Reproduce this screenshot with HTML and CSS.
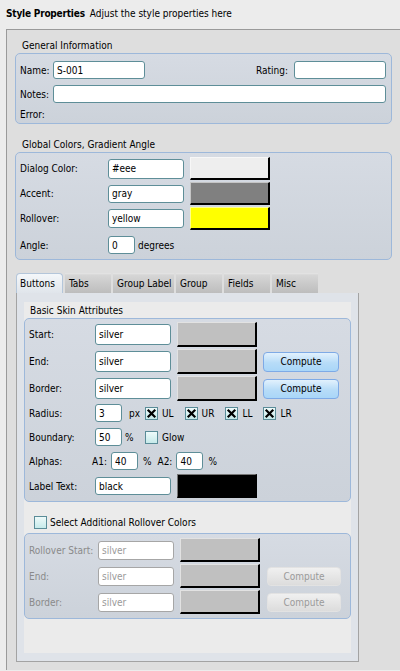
FILE: index.html
```html
<!DOCTYPE html>
<html>
<head>
<meta charset="utf-8">
<link rel="stylesheet" href="styles.css">
</head>
<body>
<div class="title"><b>Style Properties</b><span>Adjust the style properties here</span></div>
<div class="panel">
  <div class="legend">General Information</div>
  <div class="group g-general">
    <div class="row">
      <span class="lbl w33">Name:</span><input class="fld w92 h18" type="text" value="S-001">
      <span class="spacer"></span>
      <span class="lbl rating">Rating:</span><input class="fld w92 h18" type="text" value="">
    </div>
    <div class="row gap6">
      <span class="lbl w33">Notes:</span><input class="fld grow h18" type="text" value="">
    </div>
    <div class="row err"><span class="lbl">Error:</span></div>
  </div>

  <div class="legend mt14">Global Colors, Gradient Angle</div>
  <div class="group g-global">
    <div class="crow">
      <span class="lbl w88">Dialog Color:</span><input class="fld w76 h20" type="text" value="#eee"><span class="swatch sw-eee"></span>
    </div>
    <div class="crow gap2">
      <span class="lbl w88">Accent:</span><input class="fld w76 h18" type="text" value="gray"><span class="swatch sw-gray"></span>
    </div>
    <div class="crow gap2">
      <span class="lbl w88">Rollover:</span><input class="fld w76 h19" type="text" value="yellow"><span class="swatch sw-yellow"></span>
    </div>
    <div class="row angle">
      <span class="lbl w88">Angle:</span><input class="fld w27 h18" type="text" value="0"><span class="unit-deg">degrees</span>
    </div>
  </div>

  <div class="tabs">
    <span class="tab active t-buttons">Buttons</span>
    <span class="tab t46">Tabs</span>
    <span class="tab t-gl">Group Label</span>
    <span class="tab t46">Group</span>
    <span class="tab t46">Fields</span>
    <span class="tab t46">Misc</span>
  </div>
  <div class="pane">
    <div class="inner">
      <div class="legend2">Basic Skin Attributes</div>
      <div class="group g-skin">
        <div class="brow">
          <span class="lbl w66">Start:</span><input class="fld w76 h21" type="text" value="silver"><span class="swatch sw-silver h25"></span>
        </div>
        <div class="brow gap2">
          <span class="lbl w66">End:</span><input class="fld w76 h21" type="text" value="silver"><span class="swatch sw-silver h25"></span><button class="compute">Compute</button>
        </div>
        <div class="brow gap2">
          <span class="lbl w66">Border:</span><input class="fld w76 h21" type="text" value="silver"><span class="swatch sw-silver h25"></span><button class="compute">Compute</button>
        </div>
        <div class="row radius">
          <span class="lbl w66">Radius:</span><input class="fld w27 h18" type="text" value="3"><span class="unit">px</span>
          <span class="chk-item"><span class="chk on"><svg viewBox="0 0 13 13" width="13" height="13"><path d="M3.5 3.5 L9.5 9.5 M9.5 3.5 L3.5 9.5" stroke="#000" stroke-width="2.2" stroke-linecap="square" fill="none"/></svg></span><span class="chk-txt">UL</span></span>
          <span class="chk-item"><span class="chk on"><svg viewBox="0 0 13 13" width="13" height="13"><path d="M3.5 3.5 L9.5 9.5 M9.5 3.5 L3.5 9.5" stroke="#000" stroke-width="2.2" stroke-linecap="square" fill="none"/></svg></span><span class="chk-txt">UR</span></span>
          <span class="chk-item"><span class="chk on"><svg viewBox="0 0 13 13" width="13" height="13"><path d="M3.5 3.5 L9.5 9.5 M9.5 3.5 L3.5 9.5" stroke="#000" stroke-width="2.2" stroke-linecap="square" fill="none"/></svg></span><span class="chk-txt">LL</span></span>
          <span class="chk-item"><span class="chk on"><svg viewBox="0 0 13 13" width="13" height="13"><path d="M3.5 3.5 L9.5 9.5 M9.5 3.5 L3.5 9.5" stroke="#000" stroke-width="2.2" stroke-linecap="square" fill="none"/></svg></span><span class="chk-txt">LR</span></span>
        </div>
        <div class="row gap6">
          <span class="lbl w66">Boundary:</span><input class="fld w27 h18" type="text" value="50"><span class="unit pct">%</span>
          <span class="chk-item"><span class="chk"></span><span class="chk-txt">Glow</span></span>
        </div>
        <div class="row gap6">
          <span class="lbl w63">Alphas:</span><span class="a-lbl">A1:</span><input class="fld w27 h18" type="text" value="40"><span class="a-pct">%</span><span class="a-lbl a2">A2:</span><input class="fld w27 h18" type="text" value="40"><span class="a-pct">%</span>
        </div>
        <div class="crow labeltext">
          <span class="lbl w66">Label Text:</span><input class="fld w76 h18" type="text" value="black"><span class="swatch sw-black"></span>
        </div>
      </div>

      <div class="chk-row"><span class="chk"></span><span class="chk-txt">Select Additional Rollover Colors</span></div>
      <div class="group g-roll">
        <div class="crow2">
          <span class="lbl w69 dis">Rollover Start:</span><input class="fld dis-fld w76 h19" type="text" value="silver" disabled><span class="swatch sw-silver"></span>
        </div>
        <div class="crow2 gap2">
          <span class="lbl w69 dis">End:</span><input class="fld dis-fld w76 h19" type="text" value="silver" disabled><span class="swatch sw-silver"></span><button class="compute off" disabled>Compute</button>
        </div>
        <div class="crow2 gap2">
          <span class="lbl w69 dis">Border:</span><input class="fld dis-fld w76 h19" type="text" value="silver" disabled><span class="swatch sw-silver"></span><button class="compute off" disabled>Compute</button>
        </div>
      </div>
    </div>
  </div>
</div>
</body>
</html>
```

FILE: styles.css
```css
* { box-sizing: border-box; }
html, body { margin: 0; padding: 0; }
body {
  width: 400px;
  height: 671px;
  overflow: hidden;
  background: #ececec;
  font-family: "DejaVu Sans Condensed", "DejaVu Sans", sans-serif;
  font-size: 10px;
  color: #000;
}
.title {
  height: 29px;
  padding: 7px 0 0 6px;
  line-height: 13px;
}
.title b { margin-right: 5px; letter-spacing: -0.2px; }

.panel {
  margin-left: 6px;
  border-top: 1px solid #9a9a9a;
  border-left: 1px solid #9a9a9a;
  background: #dedede;
  padding: 9px 0 8px 8px;
}
.legend { line-height: 14px; padding-left: 7px; }
.mt14 { margin-top: 14px; }
.group {
  border: 1px solid #9db8da;
  border-radius: 5px;
  background: linear-gradient(#d6dbe3, #ccd2da);
}
.g-general { width: 377px; padding: 7px 5px 0 4px; }
.g-global { width: 377px; padding: 4px 0 5px 4px; }

.row { display: flex; align-items: center; height: 18px; }
.gap6 { margin-top: 6px; }
.gap2 { margin-top: 2px; }
.err { margin-top: 2px; height: 18px; }
.lbl { white-space: nowrap; flex: none; }
.w33 { width: 33px; }
.w63 { width: 63px; }
.w66 { width: 66px; }
.w69 { width: 69px; }
.w88 { width: 88px; }
.spacer { flex: 1; }
.rating { margin-right: 6px; }

.fld {
  flex: none;
  font: inherit;
  color: #000;
  background: #fff;
  border: 1px solid #5e8e98;
  border-radius: 3px;
  padding: 0 0 0 3px;
  margin: 0;
  outline: none;
}
.w92 { width: 92px; }
.w76 { width: 76px; }
.w27 { width: 27px; }
.grow { flex: 1; }
.h18 { height: 18px; }
.h19 { height: 19px; }
.h20 { height: 20px; }
.h21 { height: 21px; }

.crow { display: flex; align-items: center; height: 23px; }
.angle { margin-top: 6px; }
.unit-deg { margin-left: 3px; }

.swatch {
  flex: none;
  display: block;
  width: 80px;
  height: 24px;
  margin-left: 6px;
  border-top: 1px solid rgba(255,255,255,0.55);
  border-left: 1px solid rgba(255,255,255,0.55);
  border-right: 2px solid #000;
  border-bottom: 2px solid #000;
}
.crow .swatch { height: 23px; }
.h25 { height: 25px !important; }
.sw-eee { background: #eeeeee; }
.sw-gray { background: #808080; }
.sw-yellow { background: #ffff00; }
.sw-silver { background: #c0c0c0; }
.sw-black { background: #000; border-top-color: #777; border-left-color: #777; }

.tabs { display: flex; margin: 13px 0 0 1px; height: 20px; }
.tab {
  display: block;
  height: 20px;
  line-height: 20px;
  padding: 1px 0 0 4px;
  margin-right: 2px;
  white-space: nowrap;
  background: linear-gradient(#e6e6e6 0, #d6d6d6 2px, #bdbdbd 100%);
}
.t46 { width: 46px; }
.t-gl { width: 61px; }
.t-buttons { width: 47px; }
.tab.active {
  background: linear-gradient(#f4f7fa, #e0e5eb);
  border: 1px solid #b4c6da;
  border-bottom: none;
  border-radius: 4px 4px 0 0;
  padding-left: 3px;
  padding-top: 0;
  line-height: 20px;
}
.pane {
  width: 343px;
  margin-left: 1px;
  border: 1px solid #a3a3a3;
  border-top: none;
  background: #dfe3e9;
  padding: 9px 7px 8px 7px;
}
.inner {
  background: #ebebeb;
  padding: 1px 0 34px 0;
}
.legend2 { line-height: 15px; padding-left: 6px; }
.g-skin { padding: 3px 0 3px 4px; }
.brow { display: flex; align-items: center; height: 25px; }
.compute {
  flex: none;
  width: 76px;
  height: 20px;
  margin: 0 0 0 6px;
  padding: 0;
  font: inherit;
  color: #000;
  border: 1px solid #7eaae6;
  border-radius: 4px;
  background: linear-gradient(#e2f1fd, #b7dcf8 55%, #a9d6f8);
}
.radius { margin-top: 3px; }
.unit { display: block; width: 23px; padding-left: 7px; flex: none; }
.pct { padding-left: 3px; }
.chk-item { display: flex; align-items: center; margin-right: 11px; }
.chk {
  flex: none;
  display: block;
  width: 13px;
  height: 13px;
  border: 1px solid #5a8c98;
  background: linear-gradient(#eefafa, #c6eaea);
  position: relative;
}
.chk svg { position: absolute; left: -1px; top: -1px; }
.chk-txt { margin-left: 4px; white-space: nowrap; }
.a-lbl { margin-right: 4px; }
.a2 { margin-left: 6px; }
.a-pct { margin-left: 5px; }
.labeltext { margin-top: 4px; height: 24px; }
.labeltext .swatch { height: 24px; }

.chk-row { display: flex; align-items: center; height: 14px; margin: 13px 0 0 10px; }
.chk-row .chk-txt { margin-left: 3px; }
.g-roll { margin-top: 4px; padding: 4px 0 4px 4px; }
.crow2 { display: flex; align-items: center; height: 24px; }
.crow2 .swatch { height: 24px; }
.dis { color: #8a8a8a; }
.dis-fld { color: #9a9a9a; border-color: #a6a6a6; background: #fff; }
.compute.off {
  width: 74px;
  height: 19px;
  margin-left: 7px;
  color: #9a9a9a;
  border: 1px solid #e2e2e2;
  background: linear-gradient(#f0f0f0, #dcdcdc);
}
```
